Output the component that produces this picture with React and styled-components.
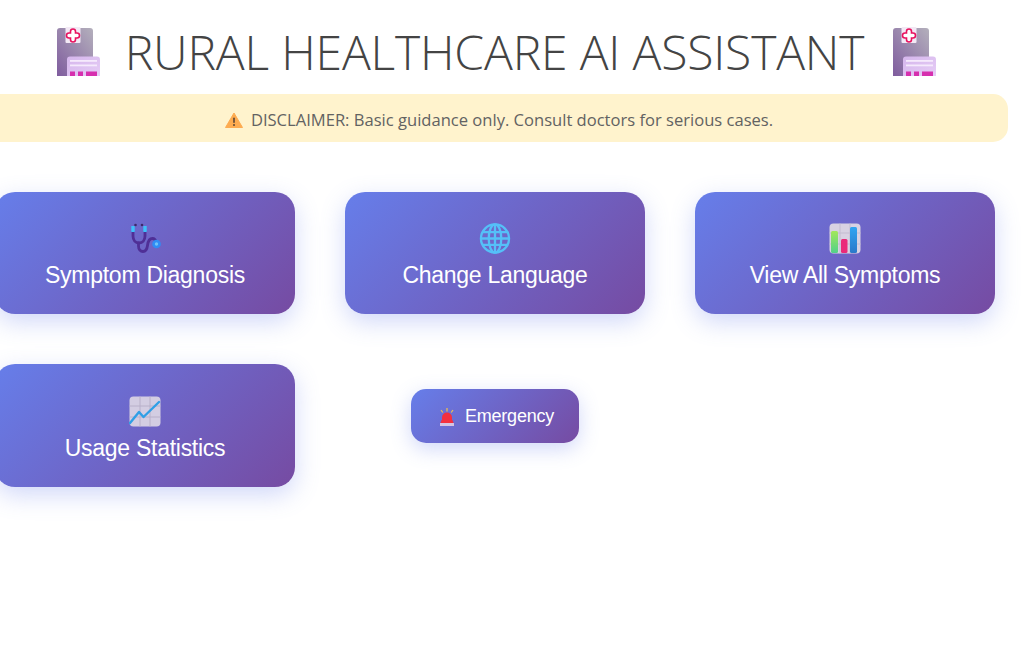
import React from 'react';
import styled, { createGlobalStyle } from 'styled-components';

const colors = {
  text: '#444444',
  note: '#626262',
  noteBg: '#fff3cd',
  from: '#667eea',
  to: '#764ba2',
  white: '#ffffff',
};

const GlobalStyle = createGlobalStyle`
  html, body {
    margin: 0;
    padding: 0;
    background: ${colors.white};
    overflow: hidden;
  }
`;

const Page = styled.div`
  width: 1026px;
  height: 666px;
  margin-left: -18px;
  padding-top: 27px;
  box-sizing: border-box;
`;

const TitleRow = styled.h1`
  margin: 0;
  height: 49px;
  padding-left: 3px;
  display: flex;
  align-items: center;
  justify-content: center;
  gap: 26px;
  font-family: "Open Sans", "Noto Sans", sans-serif;
  font-weight: 300;
  font-size: 48px;
  letter-spacing: -0.17px;
  color: ${colors.text};
`;

const TitleText = styled.span`
  margin: 0 3px 0 -1px;
`;

const Notice = styled.div`
  margin-top: 18px;
  height: 48px;
  padding: 3px 0 0 8px;
  box-sizing: border-box;
  border-radius: 15px;
  background: ${colors.noteBg};
  display: flex;
  align-items: center;
  justify-content: center;
  gap: 8px;
  font-family: "Open Sans", "Noto Sans", sans-serif;
  font-size: 16.57px;
  color: ${colors.note};
`;

const Grid = styled.div`
  margin-top: 50px;
  display: grid;
  grid-template-columns: repeat(3, 300px);
  grid-template-rows: 122px 123px;
  column-gap: 50px;
  row-gap: 50px;
  justify-content: center;
  justify-items: center;
`;

const Tile = styled.button`
  width: 300px;
  height: 100%;
  border: 0;
  padding: 5px 0 0;
  border-radius: 20px;
  background: linear-gradient(135deg, ${colors.from} 0%, ${colors.to} 100%);
  box-shadow: 0 8px 25px rgba(102, 126, 234, 0.3);
  color: ${colors.white};
  font-family: "Liberation Sans", Arial, sans-serif;
  font-size: 23px;
  letter-spacing: -0.27px;
  line-height: 26px;
  display: flex;
  flex-direction: column;
  align-items: center;
  justify-content: center;
  gap: 8px;
`;

const SmallButton = styled.button`
  width: 168px;
  height: 54px;
  margin-top: 25px;
  border: 0;
  padding: 1px 0 0 2px;
  border-radius: 15px;
  background: linear-gradient(135deg, ${colors.from} 0%, ${colors.to} 100%);
  box-shadow: 0 6px 20px rgba(102, 126, 234, 0.3);
  color: ${colors.white};
  font-family: "Liberation Sans", Arial, sans-serif;
  font-size: 18px;
  letter-spacing: -0.2px;
  display: flex;
  align-items: center;
  justify-content: center;
  gap: 9px;
`;

const Emoji = styled.svg`
  display: block;
  flex: none;
`;

const Hospital = ({ id }) => (
  <Emoji width="43" height="49" viewBox="0 0 43 49">
    <defs>
      <linearGradient id={`${id}-wall`} x1="0" y1="1" x2="1" y2="0">
        <stop offset="0" stopColor="#7f5c9e" />
        <stop offset="1" stopColor="#b4b0bc" />
      </linearGradient>
      <linearGradient id={`${id}-front`} x1="0" y1="0" x2="1" y2="1">
        <stop offset="0" stopColor="#d5b6ec" />
        <stop offset="1" stopColor="#e6cdf6" />
      </linearGradient>
    </defs>
    <path d="M3 1h30a3 3 0 0 1 3 3v45H0V4a3 3 0 0 1 3-3z" fill={`url(#${id}-wall)`} />
    <rect x="8.500" y="0" width="15" height="16" rx="1" fill="#f3e9f5" />
    <path d="M13.500 4.500a2.500 2.500 0 0 1 5 0V6H20a2.500 2.500 0 0 1 0 5h-1.500v1.500a2.500 2.500 0 0 1-5 0V11H12a2.500 2.500 0 0 1 0-5h1.500z" fill="#fff" stroke="#e8125f" strokeWidth="1.600" />
    <path d="M13 29.500h27a3 3 0 0 1 3 3V49H10V32.500a3 3 0 0 1 3-3z" fill={`url(#${id}-front)`} />
    <rect x="13" y="33" width="27" height="1.800" fill="#f5eafc" />
    <rect x="13" y="37.500" width="27" height="1.800" fill="#f5eafc" />
    <rect x="13" y="44.500" width="5" height="4.500" fill="#d62fae" />
    <rect x="21" y="44.500" width="5" height="4.500" fill="#d62fae" />
    <rect x="29" y="44.500" width="11" height="4.500" fill="#d62fae" />
  </Emoji>
);

const Warning = () => (
  <Emoji width="18" height="16" viewBox="0 0 18 16">
    <path d="M9 1L17.500 15.500H.5z" fill="#fdab50" stroke="#fdab50" strokeLinejoin="round" />
    <rect x="8.200" y="5.500" width="1.600" height="5.500" rx=".8" fill="#5a4636" />
    <circle cx="9" cy="13" r="1" fill="#5a4636" />
  </Emoji>
);

const Stethoscope = () => (
  <Emoji width="32" height="31" viewBox="0 0 32 31">
    <path d="M4 8v5c0 4 2.500 7 6 7s6-3 6-7V8" fill="none" stroke="#4f2f96" strokeWidth="2.800" />
    <path d="M9.500 20v3c0 3.500 2 5.500 4.500 5.500s4-2 4.500-6c.4-3.500 2-7 5-7 2 0 3.500 2 4.500 5" fill="none" stroke="#4f2f96" strokeWidth="2.800" strokeLinecap="round" />
    <path d="M4 9V3M16 9V3" stroke="#3fc0fa" strokeWidth="3.400" />
    <circle cx="6.500" cy="2" r="1.300" fill="#3c2a6b" />
    <circle cx="13" cy="2" r="1.300" fill="#3c2a6b" />
    <circle cx="27.500" cy="21" r="4.300" fill="#2f8cf5" />
    <circle cx="27.500" cy="21" r="1.700" fill="#6fc3f7" />
  </Emoji>
);

const Globe = () => (
  <Emoji width="32" height="31" viewBox="0 0 32 32">
    <g fill="none" stroke="#55c0f8" strokeWidth="2.400">
      <circle cx="16" cy="16" r="14.500" />
      <ellipse cx="16" cy="16" rx="6.500" ry="14.500" />
      <path d="M16 1.500v29M3.500 9.500h25M1.500 16h29M3.500 22.500h25" />
    </g>
  </Emoji>
);

const BarChart = () => (
  <Emoji width="32" height="31" viewBox="0 0 32 31">
    <defs>
      <linearGradient id="bar-green" x1="0" y1="0" x2="0" y2="1">
        <stop offset="0" stopColor="#a2e85a" />
        <stop offset="1" stopColor="#52d08a" />
      </linearGradient>
      <linearGradient id="bar-blue" x1="0" y1="0" x2="0" y2="1">
        <stop offset="0" stopColor="#2fa5f2" />
        <stop offset="1" stopColor="#2b78c9" />
      </linearGradient>
    </defs>
    <rect x=".5" y=".5" width="31" height="30" rx="4" fill="#d8d2e2" />
    <path d="M11 .5v30M21 .5v30M.5 10h31M.5 21h31" stroke="#c3bcd0" strokeWidth="1" />
    <rect x="2" y="8" width="7" height="22" rx="1.500" fill="url(#bar-green)" />
    <rect x="12" y="16" width="6.500" height="14" rx="1.500" fill="#ea2a78" />
    <rect x="21" y="4" width="7" height="26" rx="1.500" fill="url(#bar-blue)" />
  </Emoji>
);

const TrendChart = () => (
  <Emoji width="32" height="31" viewBox="0 0 32 31">
    <rect x=".5" y=".5" width="31" height="30" rx="4" fill="#d3cde2" />
    <path d="M11 .5v30M21 .5v30M.5 10h31M.5 21h31" stroke="#b8b0c9" strokeWidth="1" />
    <path d="M1 27L10 16l4.500 5L30 6" fill="none" stroke="#2f9fe6" strokeWidth="2.400" strokeLinejoin="round" strokeLinecap="round" />
  </Emoji>
);

const Siren = () => (
  <Emoji width="18" height="18" viewBox="-1 0 18 18">
    <path d="M8 0v3.500M2 2l1.800 2.500M14 2l-1.800 2.500" stroke="#f3c14a" strokeWidth="1.200" />
    <path d="M3 12V9.500a5 5 0 0 1 10 0V12z" fill="#f4303f" />
    <path d="M2.500 12h11l1 3h-13z" fill="#f4303f" />
    <rect x="1" y="15" width="14" height="3" fill="#d3c4e4" />
  </Emoji>
);

const App = () => (
  <Page>
    <GlobalStyle />
    <TitleRow>
      <Hospital id="left" />
      <TitleText>RURAL HEALTHCARE AI ASSISTANT</TitleText>
      <Hospital id="right" />
    </TitleRow>
    <Notice>
      <Warning />
      DISCLAIMER: Basic guidance only. Consult doctors for serious cases.
    </Notice>
    <Grid>
      <Tile><Stethoscope />Symptom Diagnosis</Tile>
      <Tile><Globe />Change Language</Tile>
      <Tile><BarChart />View All Symptoms</Tile>
      <Tile><TrendChart />Usage Statistics</Tile>
      <SmallButton><Siren />Emergency</SmallButton>
    </Grid>
  </Page>
);

export default App;
